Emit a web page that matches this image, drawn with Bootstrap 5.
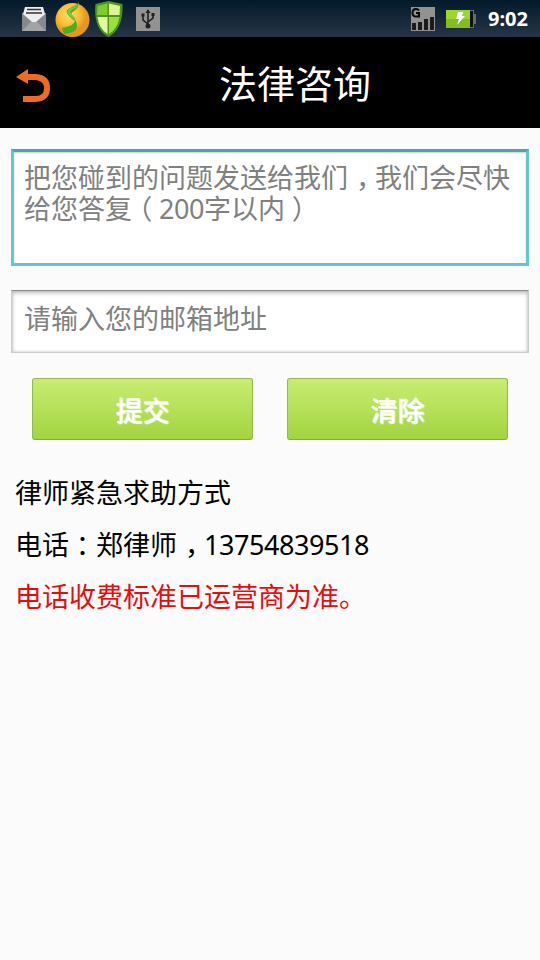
<!DOCTYPE html>
<html lang="zh-CN">
<head>
<meta charset="utf-8">
<meta name="viewport" content="width=device-width, initial-scale=1">
<title>法律咨询</title>
<link href="https://cdn.jsdelivr.net/npm/bootstrap@5.3.0/dist/css/bootstrap.min.css" rel="stylesheet">
<style>
body{font-family:"Noto Sans","Noto Sans CJK SC",sans-serif;background:#fbfbfb;font-size:27px;line-height:31px;color:#000;overflow:hidden}
.status{height:37px;background:linear-gradient(#031a2b,#263545);padding:0 9px 0 22px}
.status svg{display:block;flex:none}
.clock{font:700 20px/38px "Noto Sans",sans-serif;color:#fff;margin-left:12px;width:43px;white-space:nowrap}
.topbar{height:91px;padding:0 16px}
.back{width:35px;padding-top:7px}
.page-title{font-size:38px;line-height:56px;color:#fff;padding-left:15px}
.content-area{padding:21px 11px 0}
.field{border-radius:0;color:#808080;background:#fff;font-size:27px;line-height:31px;white-space:nowrap;overflow:hidden}
.field.message{height:117px;border:3px solid #62c6d0;border-top-color:#4ba5af;padding:10px 10px 0;box-shadow:inset 0 1px 2px #ccc}
.field.mail{height:63px;border:1px solid #ccc;border-top:1px solid #888;padding:12px 13px 0 12px;margin-top:24px;box-shadow:inset 0 2px 4px #bbb,inset 0 0 3px #ccc}
.actions{padding:25px 21px 0;gap:34px}
.action{height:62px;border:1px solid #91b94d;border-bottom-color:#83ac39;border-radius:3px;background:linear-gradient(#c9ec72,#a2d440);font-size:27px;font-weight:500;line-height:31px;color:#fff;text-shadow:1px 1px 1px #f4ffd8;padding:2px 0 0}
.action:hover{color:#fff;border-color:#91b94d}
.contact{padding:37px 4px 0;gap:21px}
.contact div{height:31px}
.notice{color:#e60d0d}
.num{letter-spacing:-.44px}
/* Half-width punctuation centred in a full-width cell */
.punct{font-feature-settings:"halt";padding:0 6.75px}
.punct-stop{padding:0 5.5px 0 8px}
</style>
</head>
<body>
<header>
<div class="status d-flex align-items-center">
<svg width="24" height="37" viewBox="0 0 24 37"><path fill="#858a8d" d="M0 13h24v18H0z"/><path fill="#a2a5a7" d="M0 31l9-9h6l9 9z"/><path fill="#eee" d="M3 7h18l2 7-9 8h-4l-9-8z"/><path stroke="#333" stroke-width="1.3" d="M5 9.500h14M4 13h16"/></svg>
<svg width="36" height="37" viewBox="0 0 36 37" style="margin-left:9px"><defs><radialGradient id="gold" cx=".4" cy=".35"><stop stop-color="#ffe06a"/><stop offset=".65" stop-color="#f8bc35"/><stop offset="1" stop-color="#e8961c"/></radialGradient></defs><circle cx="17.500" cy="20" r="17" fill="url(#gold)"/><path fill="#4ead20" d="M24 1q-1 4-7 6-7 3-5 6 1 3 8 8-1 5-13 7l2 6q12-1 13-7 1-5-5-11-2-3 2-5 5-3 5-10z"/><path fill="#7ccb3c" d="M23 4q-2 3-7 4-6 3-2 7l7 6q-1-5-5-7-2-3 2-5 5-2 5-5z"/></svg>
<svg width="28" height="37" viewBox="0 0 28 37" style="margin-left:4px"><path fill="#4c961d" d="M13.500 1l14 3q1 25-14 33Q-2 29 .5 4z"/><path fill="#78cf2c" d="M12.500 3.500V15H2L2.500 6z"/><path fill="#dff394" d="M14 3.500L25 6l-.5 9H14z"/><path fill="#e5f6a0" d="M2.500 17h10v17Q4 29 2.500 17z"/><path fill="#9bdf3b" d="M14 17h10.500q-2 12-10.500 17z"/></svg>
<svg width="24" height="37" viewBox="0 0 24 37" style="margin-left:13px"><path fill="#929292" d="M0 7h24v24H0z"/><g stroke="#202020" stroke-width="1.600" fill="none"><path d="M12 11v14M12 24l-5-4v-4M12 22l5-4v-3"/></g><path fill="#202020" d="M12 9l2.500 4h-5zM5.500 13.500h3v3h-3zM15.500 13h3v3h-3z"/><circle cx="12" cy="26" r="2.500" fill="#202020"/></svg>
<svg class="ms-auto" width="24" height="37" viewBox="0 0 24 37"><path fill="#929292" d="M0 7h24v24H0z"/><path fill="#1b1b1b" d="M1 23h4v7H1zM7 22h4v8H7zM13 19h4v11h-4zM19 17h4v13h-4z"/><path d="M8 10.500Q7 9 5 9q-3.500 0-3.500 3.700Q1.500 16.500 5 16.500H8V13H5" fill="none" stroke="#050505" stroke-width="2"/></svg>
<svg width="30" height="37" viewBox="0 0 30 37" style="margin-left:11px"><path fill="#656b70" d="M24 10h4v4h2v10h-2v4h-4z"/><path fill="#111" d="M24 11h3v16h-3z"/><path fill="#9bd72c" d="M0 10h24v18H0z"/><path fill="#83bd22" d="M0 19h24v9H0z"/><path fill="#fff" d="M12 12h5l-1 4h3l-8 9 2-6h-3z"/></svg>
<div class="clock">9:02</div>
</div>
<nav class="topbar bg-black d-flex align-items-center">
<a class="back d-block" href="#" aria-label="返回"><svg class="d-block" width="35" height="34" viewBox="0 0 35 34"><path fill="#ee6b24" d="M0 8L12 0v5h8q14 1 14 14T20 33H7v-6h13q8 0 8-8 0-7-8-8h-8v4z"/></svg></a>
<h1 class="page-title flex-grow-1 text-center mb-0 fw-normal">法律咨询</h1>
</nav>
</header>
<main class="content-area">
<div class="form-control field message" role="textbox" tabindex="0">把您碰到的问题发送给我们<span class="punct punct-stop">，</span>我们会尽快<br>给您答复<span class="punct">（</span><span class="num">200</span>字以内<span class="punct">）</span></div>
<div class="form-control field mail" role="textbox" tabindex="0">请输入您的邮箱地址</div>
<div class="actions d-flex">
<button type="button" class="btn action flex-fill">提交</button>
<button type="button" class="btn action flex-fill">清除</button>
</div>
<section class="contact d-flex flex-column">
<div>律师紧急求助方式</div>
<div>电话<span class="punct">：</span>郑律师<span class="punct punct-stop">，</span><span class="num">13754839518</span></div>
<div class="notice">电话收费标准已运营商为准。</div>
</section>
</main>
<script src="https://cdn.jsdelivr.net/npm/bootstrap@5.3.0/dist/js/bootstrap.bundle.min.js"></script>
</body>
</html>
